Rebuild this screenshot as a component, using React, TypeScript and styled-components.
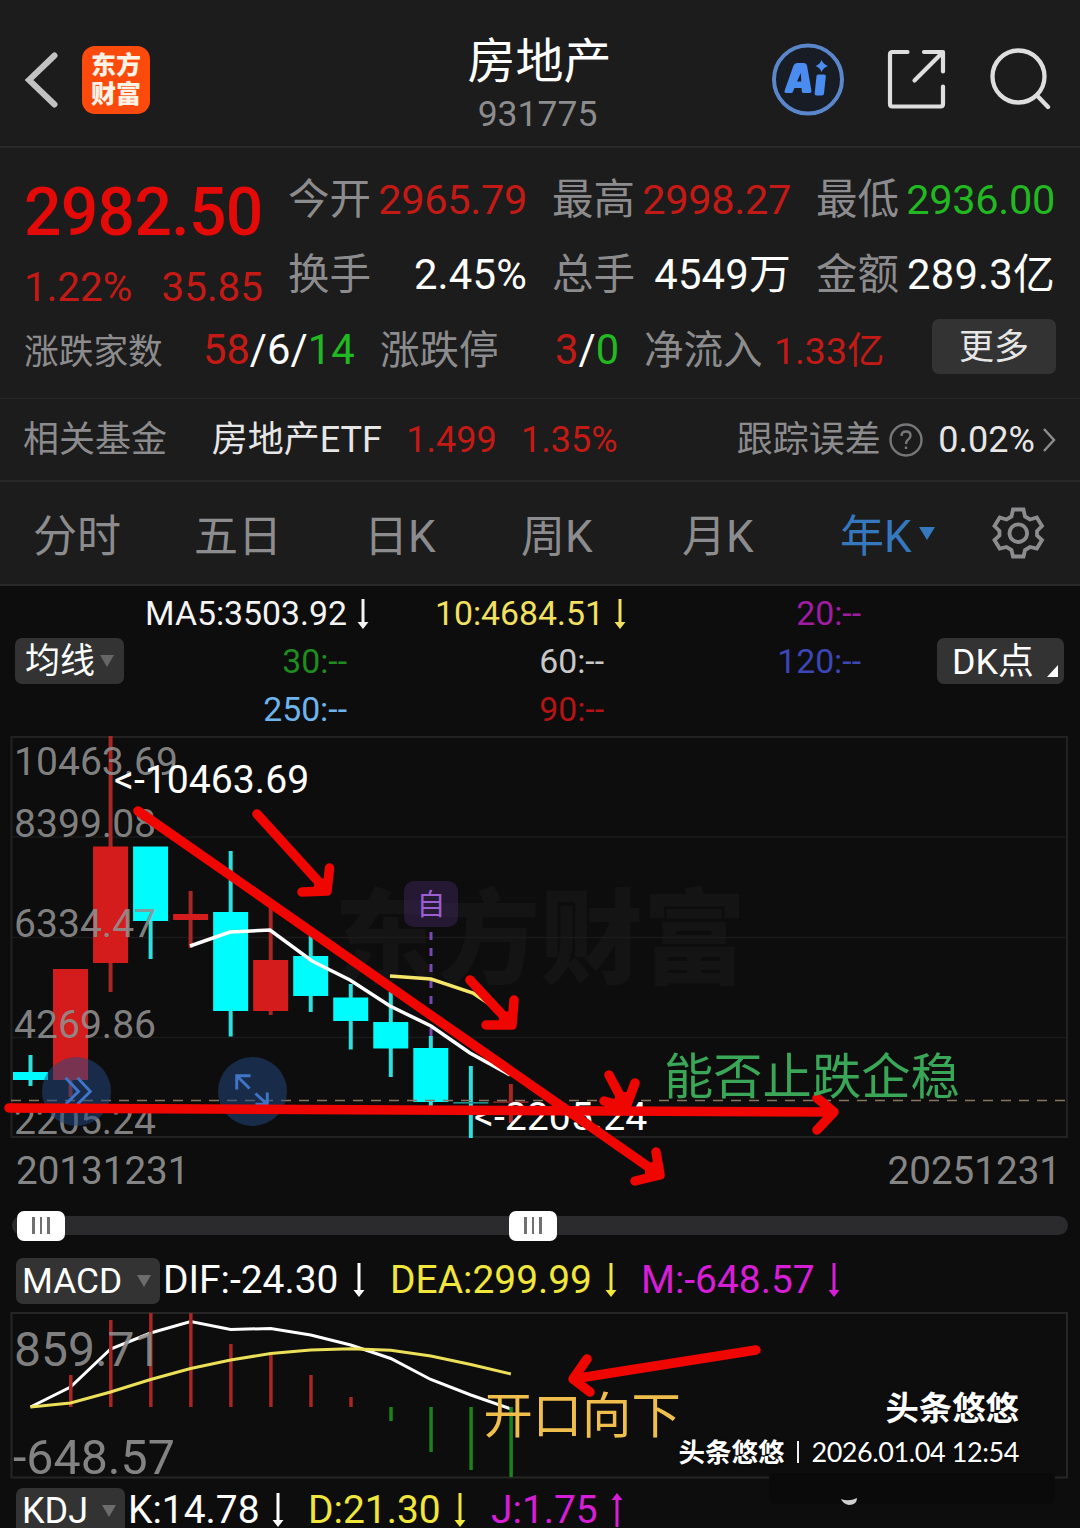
import React from "react";
import styled, { createGlobalStyle } from "styled-components";

const RED = "#c41a16";
const GREEN = "#22b822";
const GREY = "#8c8c8e";
const INK = "#f00600";

const Global = createGlobalStyle`
  * { box-sizing: border-box; }
  html, body { margin: 0; padding: 0; background: #0d0d0d; }
  body { font-family: Roboto, "Noto Sans CJK SC", sans-serif; }
  button { font: inherit; border: 0; padding: 0; background: none; color: inherit; }
`;

const Page = styled.div`
  position: relative;
  width: 1080px;
  height: 1528px;
  overflow: hidden;
  background: #0d0d0d;
  color: #fff;
  display: flex;
  flex-direction: column;
  white-space: nowrap;
`;

/* ---------- header ---------- */
const Header = styled.header`
  height: 148px;
  flex: none;
  display: grid;
  grid-template-columns: 360px 358px 362px;
  background: #1c1c1c;
  border-bottom: 2px solid #292929;
`;
const HeaderLeft = styled.div`
  display: flex;
  align-items: center;
  padding: 13px 0 0 24px;
`;
const AppBadge = styled.div`
  width: 68px;
  height: 68px;
  margin-left: 23px;
  border-radius: 13px;
  background: #fb4a0b;
  color: #fff3e6;
  display: flex;
  flex-direction: column;
  justify-content: center;
  align-items: center;
  font: 900 25px/29px "Noto Sans CJK SC", sans-serif;
  padding-bottom: 3px;
`;
const Heading = styled.div`
  display: flex;
  flex-direction: column;
  align-items: center;
  padding-top: 30px;
`;
const Title = styled.h1`
  margin: 0 0 0 1px;
  font-weight: 400;
  font-size: 48px;
  line-height: 64px;
`;
const Code = styled.div`
  margin-left: -3px;
  font-size: 35.5px;
  line-height: 40px;
  color: ${GREY};
`;
const HeaderRight = styled.div`
  display: flex;
  align-items: center;
  padding: 12px 0 0 52px;
  gap: 40px;
`;

/* ---------- quote ---------- */
const Quote = styled.section`
  height: 251px;
  flex: none;
  display: flex;
  flex-direction: column;
  background: #1c1c1c;
  border-bottom: 1px solid #262626;
  padding: 14px 24px 0;
`;
const QuoteTop = styled.div`
  display: grid;
  grid-template-columns: 264px 768px;
  height: 150px;
`;
const PriceBox = styled.div`
  padding-top: 10px;
`;
const Price = styled.div`
  font-size: 66px;
  line-height: 81px;
  font-weight: 500;
  letter-spacing: -0.7px;
  color: #e30a08;
`;
const Change = styled.div`
  display: flex;
  justify-content: space-between;
  width: 239px;
  font-size: 40.4px;
  line-height: 69px;
  color: ${RED};
`;
const Stats = styled.div`
  display: grid;
  grid-template-columns: 239px 239px 239px;
  column-gap: 25px;
  grid-auto-rows: 75px;
`;
const Stat = styled.div`
  display: flex;
  justify-content: space-between;
  font-size: 41.5px;
  line-height: 75px;
`;
const StatValue = styled.span<{ $c: string }>`
  color: ${(p) => p.$c};
  font-size: ${(p) => (p.$c === "#fff" ? 41.8 : 41.5)}px;
  letter-spacing: ${(p) => (p.$c === "#fff" ? 0.2 : -0.3)}px;
`;
const Tint = styled.span<{ $c: string }>`
  color: ${(p) => p.$c};
`;
const Breadth = styled.div`
  display: grid;
  grid-template-columns: 179px 177px 175px 89px 130px 158px 124px;
  align-items: baseline;
  font-size: 41.7px;
  line-height: 75px;
`;
const Label = styled.span<{ $s: number }>`
  font-size: ${(p) => p.$s}px;
  color: ${GREY};
`;
const Inflow = styled.span`
  font-size: 37.4px;
  color: ${RED};
`;
const More = styled.button`
  height: 55px;
  border-radius: 7px;
  background: #333;
  color: #e6e6e6;
  font-size: 35px;
  line-height: 58px;
  align-self: start;
  margin-top: 7px;
`;

/* ---------- related fund ---------- */
const Fund = styled.section`
  height: 83px;
  flex: none;
  display: flex;
  align-items: center;
  background: #1c1c1c;
  border-bottom: 2px solid #292929;
  padding: 0 24px 0 23px;
  font-size: 36px;
  line-height: 80px;
`;
const FundCell = styled.span<{ $w?: number; $c?: string }>`
  ${(p) => (p.$w ? `width: ${p.$w}px;` : "")}
  color: ${(p) => p.$c || "#e6e6e6"};
  svg { display: block; }
`;

/* ---------- tabs ---------- */
const Tabs = styled.nav`
  height: 104px;
  flex: none;
  display: grid;
  grid-template-columns: 161px 170px 157px 161px 158px 151px 90px;
  align-items: center;
  background: #1c1c1c;
  border-bottom: 2px solid #292929;
  padding-left: 33px;
`;
const Tab = styled.button<{ $on?: boolean }>`
  display: flex;
  align-items: center;
  gap: 7px;
  font-size: 44px;
  line-height: 60px;
  padding-top: 7px;
  text-align: left;
  color: ${(p) => (p.$on ? "#3578be" : GREY)};
`;
const Caret = styled.i<{ $w: number; $h: number; $c: string; $up?: number }>`
  width: 0;
  height: 0;
  margin-bottom: ${(p) => p.$up || 0}px;
  border-left: ${(p) => p.$w / 2}px solid transparent;
  border-right: ${(p) => p.$w / 2}px solid transparent;
  border-top: ${(p) => p.$h}px solid ${(p) => p.$c};
`;

/* ---------- moving averages ---------- */
const Averages = styled.section`
  height: 151px;
  flex: none;
  display: grid;
  grid-template-columns: 109px 737px 1fr 127px;
  padding: 4px 16px 0 15px;
  align-items: start;
`;
const Pill = styled.button<{ $w: number; $s: number }>`
  width: ${(p) => p.$w}px;
  height: 46px;
  flex: none;
  display: flex;
  align-items: center;
  justify-content: space-between;
  border-radius: 7px;
  background: #333;
  font-size: ${(p) => p.$s}px;
  line-height: 48px;
  padding: 0 9px 0 6px;
`;
const AvgPill = styled(Pill)`
  margin-top: 48px;
  padding: 2px 10px 0 10px;
`;
const DkPill = styled(Pill)`
  margin-top: 48px;
  padding: 2px 6px 0 15px;
`;
const Corner = styled.i`
  align-self: flex-end;
  margin-bottom: 7px;
  border-left: 11px solid transparent;
  border-bottom: 12px solid #fff;
`;
const AvgGrid = styled.div`
  display: grid;
  grid-template-columns: 223px 257px 257px;
  grid-auto-rows: 48px;
`;
const Avg = styled.div<{ $c: string }>`
  position: relative;
  text-align: right;
  font-size: 33.8px;
  line-height: 48px;
  color: ${(p) => p.$c};
  svg {
    position: absolute;
    left: 100%;
    margin-left: 10px;
    top: 9px;
  }
`;

/* ---------- charts ---------- */
const PriceChart = styled.section`
  position: relative;
  height: 400px;
  flex: none;
  svg { display: block; overflow: visible; }
`;
const Round = styled.button<{ $x: number }>`
  position: absolute;
  left: ${(p) => p.$x}px;
  top: 320px;
  width: 69px;
  height: 69px;
  border-radius: 50%;
  background: rgba(34, 72, 128, 0.52);
`;
const Mark = styled.div`
  position: absolute;
  left: 404px;
  top: 144px;
  width: 54px;
  height: 46px;
  border-radius: 10px;
  background: rgba(56, 34, 84, 0.55);
  color: #9a5fd2;
  font-size: 29px;
  line-height: 48px;
  text-align: center;
`;
const Dates = styled.div`
  height: 68px;
  flex: none;
  display: flex;
  justify-content: space-between;
  padding: 0 19px 0 16px;
  font-size: 38.6px;
  line-height: 67px;
  color: #858585;
`;
const Slider = styled.div`
  height: 40px;
  flex: none;
  display: flex;
  align-items: center;
  padding: 1px 12px 0;
`;
const Track = styled.div`
  flex: 1;
  height: 19px;
  display: flex;
  align-items: center;
  gap: 444px;
  padding-left: 5px;
  border-radius: 10px;
  background: #2b2b2d;
`;
const Thumb = styled.div`
  width: 48px;
  height: 30px;
  border-radius: 7px;
  background: #fff;
  display: flex;
  align-items: center;
  justify-content: center;
  gap: 5px;
`;
const Grip = styled.i`
  width: 2.5px;
  height: 17px;
  background: #707070;
`;
const Indicator = styled.div<{ $top: number; $h: number }>`
  height: ${(p) => p.$h}px;
  padding: ${(p) => p.$top}px 0 0 16px;
  flex: none;
  display: flex;
  align-items: flex-start;
`;
const Value = styled.span<{ $c: string; $w: number; $gap: number }>`
  width: ${(p) => p.$w}px;
  margin-left: ${(p) => p.$gap}px;
  font-size: 38.9px;
  line-height: 44px;
  color: ${(p) => p.$c};
  display: flex;
  justify-content: space-between;
  align-items: center;
`;
const MacdChart = styled.section`
  height: 166px;
  flex: none;
  svg { display: block; overflow: visible; }
`;
const Overlay = styled.svg`
  position: absolute;
  inset: 0;
  pointer-events: none;
`;
const Signature = styled.div`
  position: absolute;
  right: 61px;
  top: 1386px;
  text-align: right;
  font-weight: 700;
  text-shadow: 0 0 3px rgba(0, 0, 0, 0.6);
`;
const SignName = styled.div`
  font-size: 33.4px;
  line-height: 46px;
`;
const SignLine = styled.div`
  display: flex;
  align-items: center;
  justify-content: flex-end;
  font-size: 26.5px;
  line-height: 40px;
`;
const SignBar = styled.i`
  width: 2px;
  height: 22px;
  margin: 0 12px 3px 13px;
  background: #f0f0f0;
`;
const SignDate = styled.span`
  font-family: Lato, sans-serif;
  font-size: 27px;
  font-weight: 400;
  letter-spacing: -0.42px;
  padding-bottom: 2px;
`;

function Arrow({ c, h = 34, up = false }: { c: string; h?: number; up?: boolean }) {
  return (
    <svg width="12" height={h} viewBox={`0 0 12 ${h}`}>
      <g transform={up ? `rotate(180 6 ${h / 2})` : undefined}>
        <path d={`M6 0V${h - 4}`} stroke={c} strokeWidth="3" />
        <path d={`M0.5 ${h - 7}H11.5L6 ${h}Z`} fill={c} />
      </g>
    </svg>
  );
}

const STATS: [string, string, string][] = [
  ["今开", "2965.79", RED],
  ["最高", "2998.27", RED],
  ["最低", "2936.00", GREEN],
  ["换手", "2.45%", "#fff"],
  ["总手", "4549万", "#fff"],
  ["金额", "289.3亿", "#fff"],
];

const AVERAGES: [string, string, boolean?][] = [
  ["MA5:3503.92", "#f4f4f4", true],
  ["10:4684.51", "#f2e060", true],
  ["20:--", "#a01ca0"],
  ["30:--", "#1e8c1e"],
  ["60:--", "#c8c8c8"],
  ["120:--", "#3c46b4"],
  ["250:--", "#6eb4ec"],
  ["90:--", "#b41414"],
];

const PITCH = 40.03;
const cx = (i: number) => 30.5 + i * PITCH;

/* colour, body top, body bottom, wick top, wick bottom */
const CANDLES: [string, number, number, number, number][] = [
  ["c", 1072, 1080, 1055, 1086],
  ["r", 969, 1080, 969, 1097],
  ["r", 846.5, 963, 736, 992],
  ["c", 846.5, 921, 847, 959],
  ["r", 914, 920, 891, 948],
  ["c", 912, 1011, 851, 1036.5],
  ["r", 960, 1011, 907, 1015],
  ["c", 956, 996, 935, 1012],
  ["c", 997.5, 1021, 984, 1049.5],
  ["c", 1022, 1048.5, 992, 1077],
  ["c", 1048, 1102, 1036, 1106],
  ["c", 1102, 1103.6, 1066, 1138],
  ["r", 1101.2, 1103, 1084, 1123],
];
const Y_LABELS: [string, number][] = [
  ["10463.69", 774.5],
  ["8399.08", 836.5],
  ["6334.47", 937],
  ["4269.86", 1038],
  ["2205.24", 1134],
];
const BARS = [null, 1375, 1320, 1313, 1313, 1344, 1355, 1375, 1397, 1421, 1452, 1470, 1477];
const DIF = [1407, 1387, 1349, 1333, 1321.5, 1329.5, 1328.5, 1335, 1345, 1358.5, 1379.5, 1395, 1409];
const DEA = [1407, 1403, 1392, 1379.5, 1368.5, 1360, 1353.5, 1350, 1348.7, 1350.3, 1356, 1364.5, 1374];
const line = (ys: number[]) => ys.map((y, i) => `${cx(i)},${y}`).join(" ");

const STROKES = [
  "M138 811L660 1175M656 1152L660 1175L635 1181",
  "M257 814L327 891M329.500 868L327 891L302 892",
  "M470 980L512 1025M514 1000L512 1025L486 1025",
  "M609 1075L626 1107M635 1083L626 1107L604 1101",
  "M9 1108L834 1112M817 1098L834 1112L817 1130",
  "M756 1350L573 1379M587 1359L573 1379L590 1392",
];
/* inner fill where each barb meets its shaft */
const HEADS = [
  "M657 1160L660 1175L645 1178L645 1165Z",
  "M328 879L327 891L313 892L315 878Z",
  "M513 1011L512 1025L498 1025L500 1012Z",
  "M632 1092L626 1107L612 1103L618 1092Z",
  "M824 1103L834 1112L824 1123Z",
  "M581 1367L573 1379L583 1387Z",
];

export default function App() {
  return (
    <Page>
      <Global />
      <Header>
        <HeaderLeft>
          <svg width="35" height="58" viewBox="0 0 35 58">
            <path d="M30.500 4.500L5 29L30.500 53.500" fill="none" stroke="#c2c2c2" strokeWidth="6" strokeLinecap="round" />
          </svg>
          <AppBadge>
            <span>东方</span>
            <span>财富</span>
          </AppBadge>
        </HeaderLeft>
        <Heading>
          <Title>房地产</Title>
          <Code>931775</Code>
        </Heading>
        <HeaderRight>
          <svg width="76" height="76" viewBox="0 0 76 76">
            <circle cx="38" cy="38.500" r="34" fill="#181c24" stroke="#5a87cc" strokeWidth="4" />
            <path
              d="M14.500 50L23.500 24.500Q24.500 22 27 22H34Q36.500 22 37 24.500L41.500 50Q41.500 52 40 52H33.500Q32 52 31.800 50.500L31.500 47H24.500L23 50.500Q22.500 52 21 52H16Q14 52 14.500 50ZM27 40.500H31.300L30.800 32Z"
              fill="#4a8cf0"
              fillRule="evenodd"
            />
            <path d="M48 33.500H54Q56 33.500 55.800 35.500L54 52.500Q53.700 54.500 52 54.500H46.500Q44.500 54.500 44.700 52.500L46.500 35Q46.700 33.500 48 33.500Z" fill="#4a8cf0" />
            <path d="M51.500 19Q53.500 23.500 58 25Q53.500 26.500 51.500 31Q50 26.500 45.500 25Q50 23.500 51.500 19Z" fill="#4a8cf0" />
          </svg>
          <svg width="62" height="62" viewBox="0 0 62 62" fill="none" stroke="#dedede" strokeWidth="4.200" strokeLinecap="round" strokeLinejoin="round">
            <path d="M21.500 4H6.500Q4 4 4 6.500V56Q4 58.500 6.500 58.500H54.500Q57 58.500 57 56V38.500" />
            <path d="M38 4H57V23.500M56.500 4.500L28.500 32.500" />
          </svg>
          <svg width="64" height="62" viewBox="0 0 64 62" fill="none" stroke="#dedede" strokeWidth="4.300" strokeLinecap="round">
            <circle cx="30.500" cy="28.500" r="26" />
            <path d="M49 47.500L60 59" />
          </svg>
        </HeaderRight>
      </Header>

      <Quote>
        <QuoteTop>
          <PriceBox>
            <Price>2982.50</Price>
            <Change>
              <span>1.22%</span>
              <span>35.85</span>
            </Change>
          </PriceBox>
          <Stats>
            {STATS.map(([k, v, c]) => (
              <Stat key={k}>
                <Tint $c={GREY}>{k}</Tint>
                <StatValue $c={c}>{v}</StatValue>
              </Stat>
            ))}
          </Stats>
        </QuoteTop>
        <Breadth>
          <Label $s={34.700}>涨跌家数</Label>
          <span>
            <Tint $c={RED}>58</Tint>/6/<Tint $c={GREEN}>14</Tint>
          </span>
          <Label $s={39.500}>涨跌停</Label>
          <span>
            <Tint $c={RED}>3</Tint>/<Tint $c={GREEN}>0</Tint>
          </span>
          <Label $s={39.500}>净流入</Label>
          <Inflow>1.33亿</Inflow>
          <More>更多</More>
        </Breadth>
      </Quote>

      <Fund>
        <FundCell $w={189} $c={GREY}>相关基金</FundCell>
        <FundCell $w={195}>房地产ETF</FundCell>
        <FundCell $w={115} $c={RED}>1.499</FundCell>
        <FundCell $w={216} $c={RED}>1.35%</FundCell>
        <FundCell $w={153} $c={GREY}>跟踪误差</FundCell>
        <FundCell $w={49}>
          <svg width="34" height="34" viewBox="0 0 34 34" fill="none" stroke="#77777a" strokeWidth="2.400">
            <circle cx="17" cy="17" r="15.500" />
            <path d="M12.500 13Q12.500 8.500 17 8.500Q21.500 8.500 21.500 12.500Q21.500 15 19 16.800Q17 18.300 17 21M17 23.500V26" />
          </svg>
        </FundCell>
        <FundCell $w={104}>0.02%</FundCell>
        <svg width="14" height="28" viewBox="0 0 14 28">
          <path d="M2 3L12 14L2 25" fill="none" stroke="#8c8c8e" strokeWidth="2.500" />
        </svg>
      </Fund>

      <Tabs>
        <Tab>分时</Tab>
        <Tab>五日</Tab>
        <Tab>日K</Tab>
        <Tab>周K</Tab>
        <Tab>月K</Tab>
        <Tab $on>
          年K
          <Caret $w={16} $h={13} $c="#3578be" $up={7} />
        </Tab>
        <svg width="54" height="54" viewBox="0 0 54 54" fill="none" stroke="#8c8c8e" strokeWidth="3.800" strokeLinejoin="miter">
          <path d="M22 3.500H32.500L34 10.500L39 13.500L45.800 11.500L51 20L46 25V29.500L51 34L45.800 42.500L39 41L34 44L32.500 50.500H22L20.500 44L15.500 41L8.700 42.500L3.500 34L8.500 29.500V25L3.500 20L8.700 11.500L15.500 13.500L20.500 10.500Z" />
          <circle cx="27.300" cy="27.200" r="8.800" />
        </svg>
      </Tabs>

      <Averages>
        <AvgPill $w={109} $s={35}>
          均线
          <Caret $w={14} $h={12} $c="#666" $up={2} />
        </AvgPill>
        <AvgGrid>
          {AVERAGES.map(([t, c, arrow]) => (
            <Avg key={t} $c={c}>
              {t}
              {arrow && <Arrow c={c} h={30} />}
            </Avg>
          ))}
        </AvgGrid>
        <span />
        <DkPill $w={127} $s={35.800}>
          DK点
          <Corner />
        </DkPill>
      </Averages>

      <PriceChart>
        <svg width="1080" height="400" viewBox="0 737 1080 400">
          <text x="334" y="976" fontSize="103" fontWeight="900" fill="#141414">东方财富</text>
          <path d="M12 837H1067M12 937.500H1067M12 1037.500H1067" stroke="#1b1b1b" strokeWidth="1.500" />
          <rect x="11.500" y="737" width="1055.500" height="400" fill="none" stroke="#222" strokeWidth="2" />
          <path d="M431 932V1036" stroke="#7a46b4" strokeWidth="3" strokeDasharray="8 8" />
          {CANDLES.map(([k, t, b, wt, wb], i) => (
            <g key={i}>
              <rect x={cx(i) - 2} y={wt} width="4" height={wb - wt} fill={k === "c" ? "#2fdede" : "#a82624"} />
              <rect
                x={cx(i) - 17.500}
                y={t}
                width="35"
                height={b - t}
                fill={b - t < 3 ? (k === "c" ? "#1f8f8f" : "#7a2220") : k === "c" ? "#00fcfc" : "#d41c1c"}
              />
            </g>
          ))}
          <path d="M11 1100.500H1067" stroke="#8a7660" strokeWidth="1.500" strokeDasharray="10 8" />
          <polyline
            points="190,946 230,932 270,930 312,961 350,980 390,1006 431,1026 470,1053 510,1075"
            fill="none"
            stroke="#fff"
            strokeWidth="3.500"
          />
          <polyline points="390,976 431,979 473,993 510,1018" fill="none" stroke="#f5e66a" strokeWidth="3.500" />
          {Y_LABELS.map(([t, y]) => (
            <text key={t} x="14" y={y} fontSize="39.100" fill="#909090" fillOpacity="0.900">{t}</text>
          ))}
          <text x="114" y="792.500" fontSize="39.200" fill="#fff">&lt;-10463.69</text>
          <text x="474" y="1129.500" fontSize="39.200" fill="#fff">&lt;-2205.24</text>
        </svg>
        <Mark>自</Mark>
        <Round $x={42}>
          <svg width="69" height="69" viewBox="0 0 70 70" fill="none" stroke="#3f74c8" strokeWidth="3">
            <path d="M24 21L37 35L24 48M36 21L49 35L36 48" />
          </svg>
        </Round>
        <Round $x={218}>
          <svg width="69" height="69" viewBox="0 0 70 70" fill="none" stroke="#3f74c8" strokeWidth="3">
            <path d="M19 33V19H33M19 19L32 32M50 36V48H38M50 48L38 37" />
          </svg>
        </Round>
      </PriceChart>

      <Dates>
        <span>20131231</span>
        <span>20251231</span>
      </Dates>
      <Slider>
        <Track>
          {[0, 1].map((i) => (
            <Thumb key={i}>
              <Grip />
              <Grip />
              <Grip />
            </Thumb>
          ))}
        </Track>
      </Slider>

      <Indicator $top={13} $h={67}>
        <Pill $w={144} $s={35.300}>
          MACD
          <Caret $w={15} $h={12} $c="#6c6c6c" />
        </Pill>
        <Value $c="#fff" $w={202} $gap={3}>
          DIF:-24.30 <Arrow c="#fff" />
        </Value>
        <Value $c="#f0e63c" $w={227} $gap={25}>
          DEA:299.99 <Arrow c="#f0e63c" />
        </Value>
        <Value $c="#d61ed6" $w={199} $gap={24}>
          M:-648.57 <Arrow c="#d61ed6" />
        </Value>
      </Indicator>

      <MacdChart>
        <svg width="1080" height="166" viewBox="0 1312 1080 166">
          <rect x="11.500" y="1313" width="1055.500" height="164.500" fill="none" stroke="#262626" strokeWidth="2" />
          <polyline points={line(DIF)} fill="none" stroke="#fff" strokeWidth="3" />
          {BARS.map((y, i) =>
            y === null ? null : (
              <rect
                key={i}
                x={cx(i) - 1.500}
                y={Math.min(y, 1407)}
                width="3.500"
                height={Math.abs(1407 - y)}
                fill={y < 1407 ? "#a82624" : "#1c821c"}
              />
            )
          )}
          <polyline points={line(DEA)} fill="none" stroke="#ece058" strokeWidth="3" />
          <text x="14" y="1365.500" fontSize="48" fill="#909090" fillOpacity="0.900">859.71</text>
          <text x="13" y="1473.500" fontSize="48.300" fill="#909090" fillOpacity="0.900">-648.57</text>
        </svg>
      </MacdChart>

      <Indicator $top={10} $h={60}>
        <Pill $w={109} $s={36}>
          KDJ
          <Caret $w={15} $h={12} $c="#6c6c6c" />
        </Pill>
        <Value $c="#fff" $w={156} $gap={3}>
          K:14.78 <Arrow c="#fff" />
        </Value>
        <Value $c="#f0e63c" $w={158} $gap={24}>
          D:21.30 <Arrow c="#f0e63c" />
        </Value>
        <Value $c="#d61ed6" $w={132} $gap={25}>
          J:1.75 <Arrow c="#d61ed6" up />
        </Value>
      </Indicator>

      <Overlay width="1080" height="1528" viewBox="0 0 1080 1528">
        <g fill="none" stroke={INK} strokeWidth="9.500" strokeLinecap="round" strokeLinejoin="round">
          {STROKES.map((d) => (
            <path key={d} d={d} />
          ))}
        </g>
        <g fill={INK}>
          {HEADS.map((d) => (
            <path key={d} d={d} />
          ))}
        </g>
        <text x="664" y="1094" fontSize="49.300" fill="#3aa657">能否止跌企稳</text>
        <text x="483.500" y="1433" fontSize="49.300" fill="#f0be4c">开口向下</text>
        <rect x="769" y="1473" width="286" height="31" rx="6" fill="#0a0a0a" />
        <path d="M841 1499Q849 1502 857 1498Q857 1505 849 1505Q843 1504 841 1499Z" fill="#cfcfcf" />
      </Overlay>
      <Signature>
        <SignName>头条悠悠</SignName>
        <SignLine>
          头条悠悠
          <SignBar />
          <SignDate>2026.01.04 12:54</SignDate>
        </SignLine>
      </Signature>
    </Page>
  );
}
